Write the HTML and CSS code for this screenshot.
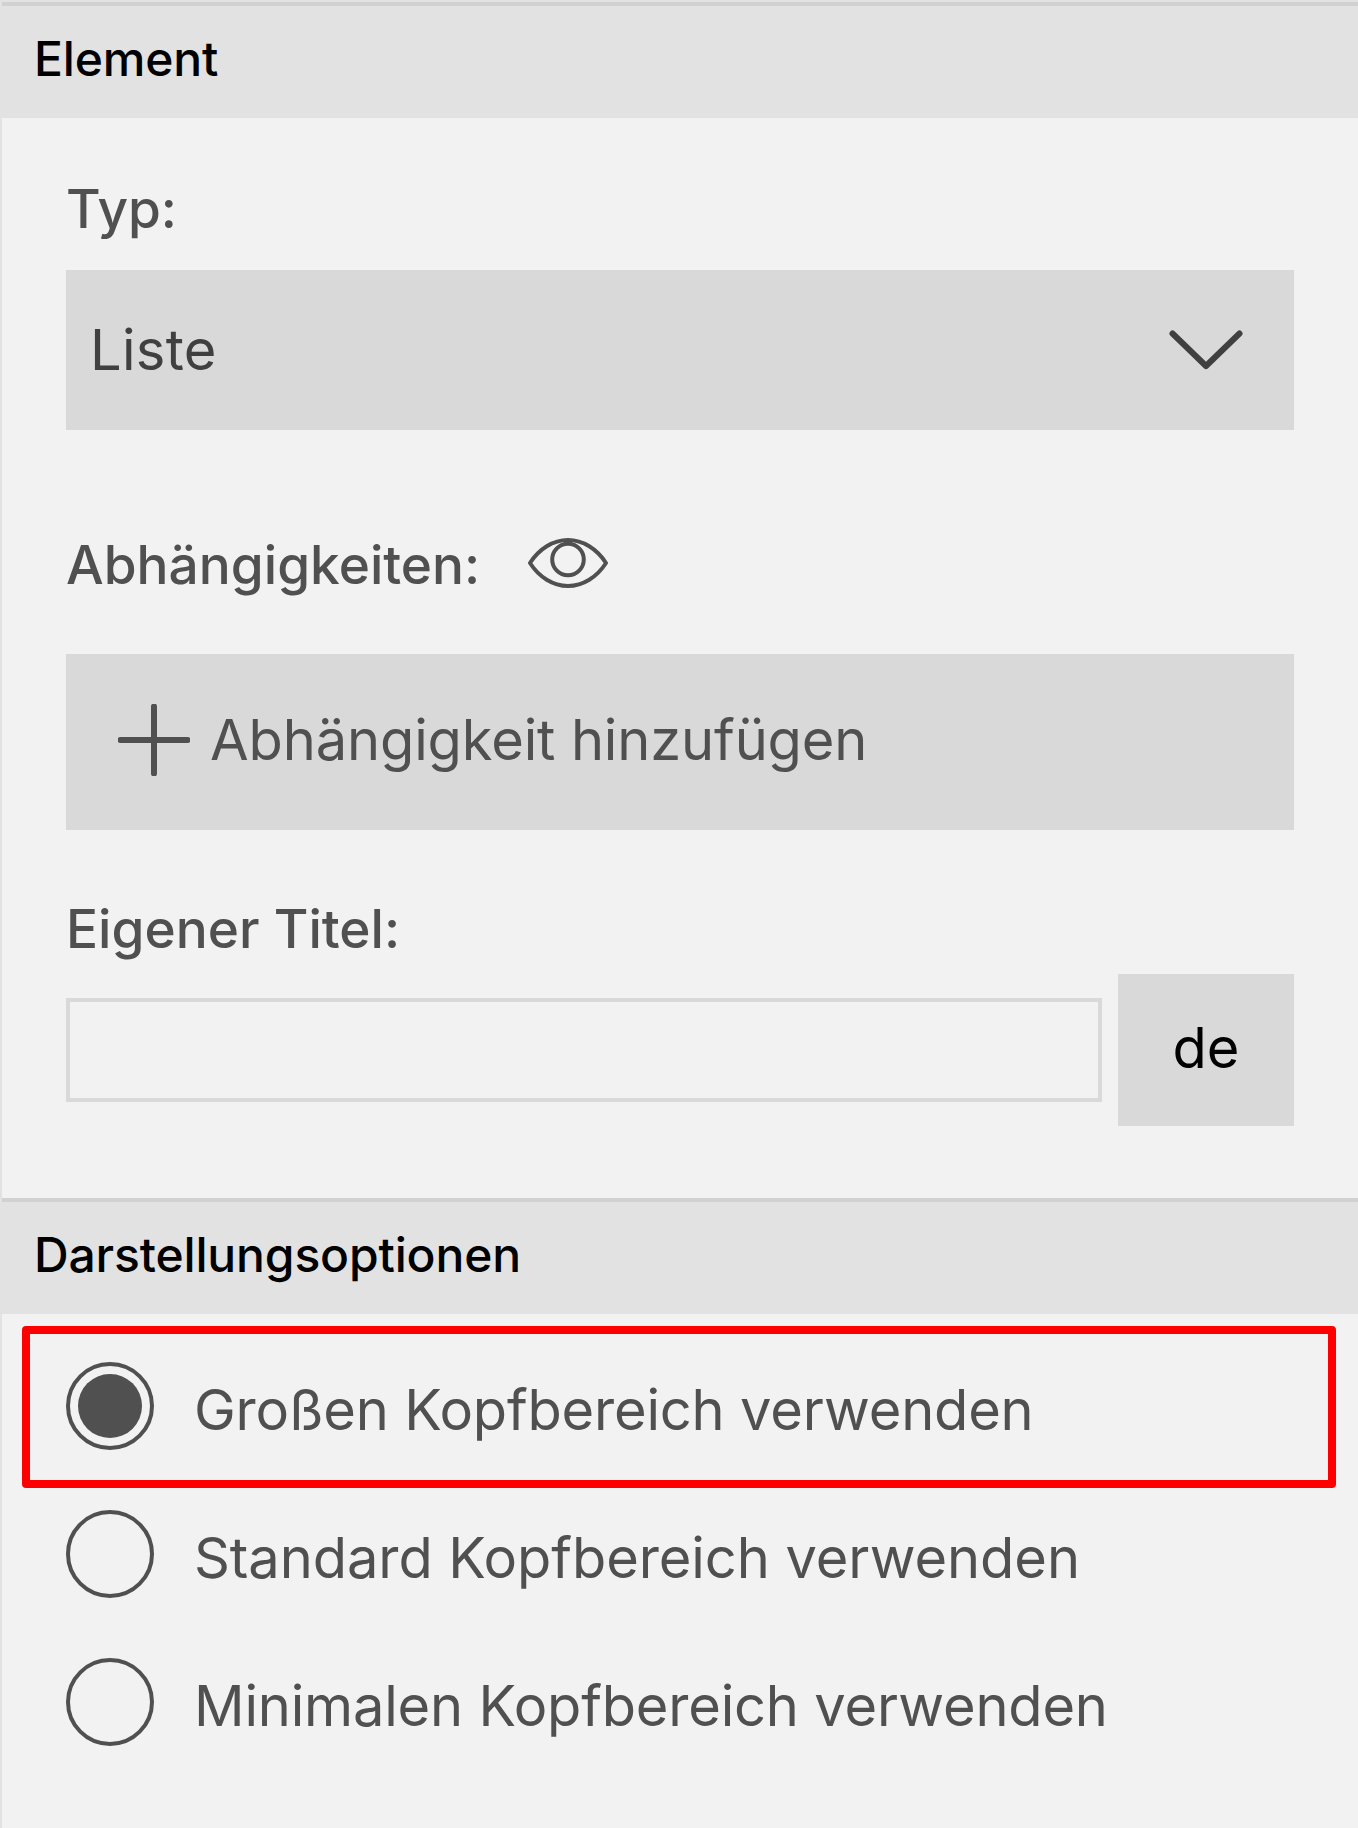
FILE: index.html
```html
<!DOCTYPE html>
<html lang="de">
<head>
<meta charset="utf-8">
<title>Element</title>
<link rel="stylesheet" href="styles.css">
</head>
<body>
<main class="panel">
  <section>
    <h2 class="panel-header">Element</h2>
    <div class="fields">
      <div class="label">Typ:</div>
      <div class="select">
        <span>Liste</span>
        <svg class="chevron" width="76" height="44" viewBox="0 0 76 44"><path d="M4.5 5.5 38 38 71.5 5.5"/></svg>
      </div>
      <div class="label label-dependencies">
        <span>Abhängigkeiten:</span>
        <svg class="eye" width="80" height="50" viewBox="0 0 80 50"><path d="M2 25C11 11 25 2 40 2s29 9 38 23C69 39 55 48 40 48S11 39 2 25Z"/><circle cx="40" cy="21.5" r="15.8"/></svg>
      </div>
      <button class="add-button" type="button">
        <svg class="plus" width="72" height="72" viewBox="0 0 72 72"><path d="M36 2.5v67M2.5 36h67"/></svg>
        <span>Abhängigkeit hinzufügen</span>
      </button>
      <label class="label label-title" for="custom-title">Eigener Titel:</label>
      <div class="title-row">
        <input class="title-input" id="custom-title" type="text">
        <button class="language" type="button">de</button>
      </div>
    </div>
  </section>
  <section>
    <h2 class="panel-header">Darstellungsoptionen</h2>
    <div class="options">
      <div class="option highlighted"><span class="radio checked"></span><span class="option-text">Großen Kopfbereich verwenden</span></div>
      <div class="option"><span class="radio"></span><span class="option-text option-text-standard">Standard Kopfbereich verwenden</span></div>
      <div class="option"><span class="radio"></span><span class="option-text">Minimalen Kopfbereich verwenden</span></div>
    </div>
  </section>
</main>
</body>
</html>
```

FILE: styles.css
```css
* { box-sizing: border-box; }
body {
  margin: 0;
  background: #f2f2f2;
  color: #505050;
  font: 400 56px Inter, sans-serif;
}
.panel {
  min-height: 1828px;
  padding-top: 2px;
  border-left: 2px solid #e2e2e2;
  background: linear-gradient(#e2e2e2 2px, transparent 2px);
}
.panel-header {
  height: 116px;
  margin: 0;
  padding: 24px 0 0 32px;
  border-top: 4px solid #d1d1d1;
  background: #e2e2e2;
  color: #000;
  font-size: 48px;
  font-weight: 500;
  line-height: 57px;
  letter-spacing: -0.15px;
}
.fields {
  height: 1080px;
  padding: 59px 64px 0;
}
.label {
  display: flex;
  align-items: center;
  height: 64px;
  font-size: 53.2px;
  font-weight: 500;
  line-height: 64px;
}
.select {
  display: flex;
  align-items: center;
  justify-content: space-between;
  height: 160px;
  margin-top: 29px;
  padding: 0 50px 0 24px;
  background: #d9d9d9;
  color: #404040;
  letter-spacing: 0.3px;
}
svg { fill: none; stroke: currentColor; }
.chevron { stroke-width: 6; stroke-linecap: round; stroke-linejoin: round; }
.label-dependencies { margin-top: 103px; gap: 48px; }
.eye { margin-bottom: 4px; stroke-width: 4; stroke-linejoin: round; }
.plus { stroke-width: 6; stroke-linecap: round; }
button {
  border: 0;
  background: #d9d9d9;
  color: inherit;
  font: inherit;
}
.add-button {
  display: flex;
  align-items: center;
  gap: 20px;
  width: 100%;
  height: 176px;
  margin-top: 57px;
  padding: 0 52px 4px;
  letter-spacing: -0.13px;
}
.label-title { margin-top: 67px; }
.title-row {
  display: flex;
  align-items: center;
  gap: 16px;
  margin-top: 13px;
}
.title-input {
  flex: 1;
  min-width: 0;
  height: 104px;
  border: 4px solid #d9d9d9;
  border-radius: 0;
  background: transparent;
  font: inherit;
}
.language {
  width: 176px;
  height: 152px;
  padding: 0 0 4px;
  color: #000;
}
.options { padding: 18px 64px 0; }
.option {
  position: relative;
  display: flex;
  align-items: center;
  gap: 40px;
  height: 148px;
}
.option-text { padding-top: 8px; letter-spacing: -0.19px; }
.option-text-standard { letter-spacing: -0.08px; }
.radio {
  width: 88px;
  height: 88px;
  padding: 8px;
  border: 4px solid #505050;
  border-radius: 50%;
}
.checked::before {
  content: "";
  display: block;
  width: 64px;
  height: 64px;
  border-radius: 50%;
  background: #505050;
}
.highlighted::after {
  content: "";
  position: absolute;
  inset: -6px -42px -8px -44px;
  border: 8px solid #f00;
  border-radius: 4px;
}
```
